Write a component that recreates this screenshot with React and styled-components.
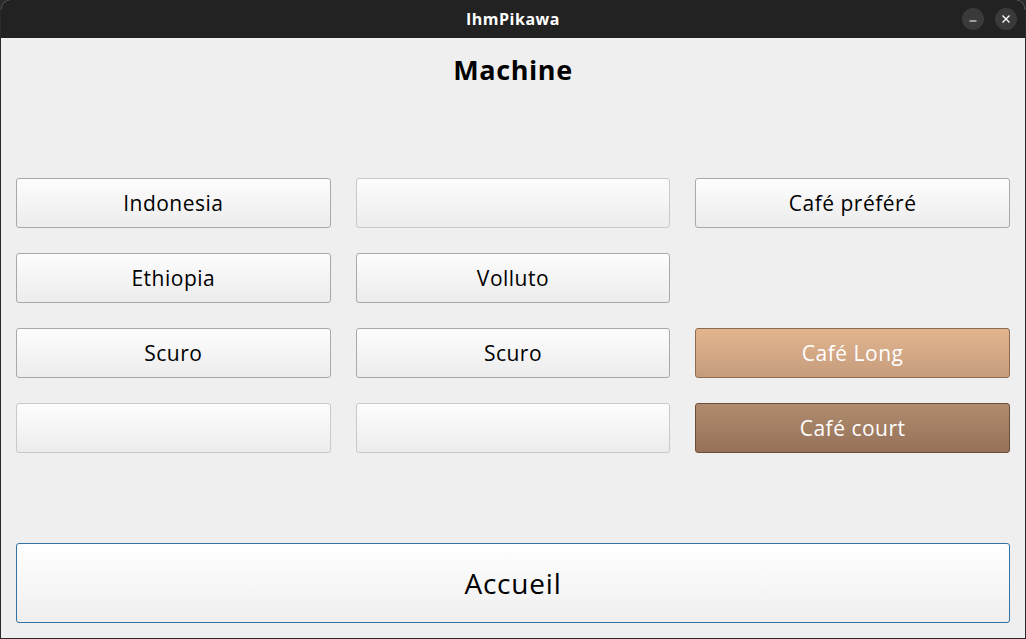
import styled, { createGlobalStyle } from 'styled-components';

const GlobalStyle = createGlobalStyle`
  html, body {
    margin: 0;
    padding: 0;
    background: #2b2b2b;
  }
  * {
    box-sizing: border-box;
  }
`;

const Window = styled.div`
  width: 1026px;
  height: 639px;
  display: flex;
  flex-direction: column;
  background: #efefef;
  border: 1px solid #2a2a2a;
  border-top: none;
  border-radius: 10px 10px 0 0;
  overflow: hidden;
  font-family: "Open Sans", "Noto Sans", sans-serif;
`;

const TitleBar = styled.div`
  height: 38px;
  flex-shrink: 0;
  background: #222222;
  display: flex;
  align-items: center;
  justify-content: center;
  position: relative;
  color: #ffffff;
  font-size: 16px;
  letter-spacing: 0.5px;
  font-weight: 700;
`;

const WindowControls = styled.div`
  position: absolute;
  right: 8px;
  top: 8px;
  display: flex;
  gap: 11px;
`;

const ControlButton = styled.div`
  width: 22px;
  height: 22px;
  border-radius: 50%;
  background: #3a3a3a;
  display: flex;
  align-items: center;
  justify-content: center;
`;

const Content = styled.div`
  flex: 1;
  display: flex;
  flex-direction: column;
  padding: 12px 15px 15px 15px;
`;

const Heading = styled.h1`
  margin: 0;
  height: 40px;
  line-height: 40px;
  text-align: center;
  font-size: 27px;
  letter-spacing: 0.6px;
  font-weight: 700;
  color: #000000;
`;

const Grid = styled.div`
  margin-top: 88px;
  display: grid;
  grid-template-columns: repeat(3, 1fr);
  grid-auto-rows: 50px;
  column-gap: 25px;
  row-gap: 25px;
`;

const tones = {
  normal: {
    bg: 'linear-gradient(#fdfdfd, #ececec)',
    border: '#a9a9a9',
    color: '#000000',
  },
  empty: {
    bg: 'linear-gradient(#fdfdfd, #ececec)',
    border: '#c9c9c9',
    color: '#000000',
  },
  long: {
    bg: 'linear-gradient(#e3b58f, #c59c7c)',
    border: '#8c6b51',
    color: '#ffffff',
  },
  court: {
    bg: 'linear-gradient(#b08b6f, #957258)',
    border: '#6a4e3a',
    color: '#ffffff',
  },
};

const Button = styled.div`
  display: flex;
  align-items: center;
  justify-content: center;
  border-radius: 3px;
  border: 1px solid ${p => tones[p.$tone].border};
  background: ${p => tones[p.$tone].bg};
  color: ${p => tones[p.$tone].color};
  font-size: 21px;
  letter-spacing: 0.5px;
`;

const Blank = styled.div``;

const Spacer = styled.div`
  flex: 1;
`;

const HomeButton = styled.div`
  height: 80px;
  display: flex;
  align-items: center;
  justify-content: center;
  border: 1px solid #2f73a8;
  border-radius: 3px;
  background: linear-gradient(#ffffff, #efefef);
  font-size: 28px;
  letter-spacing: 0.8px;
  color: #000000;
`;

const cells = [
  { label: 'Indonesia', tone: 'normal' },
  { label: '', tone: 'empty' },
  { label: 'Café préféré', tone: 'normal' },
  { label: 'Ethiopia', tone: 'normal' },
  { label: 'Volluto', tone: 'normal' },
  null,
  { label: 'Scuro', tone: 'normal' },
  { label: 'Scuro', tone: 'normal' },
  { label: 'Café Long', tone: 'long' },
  { label: '', tone: 'empty' },
  { label: '', tone: 'empty' },
  { label: 'Café court', tone: 'court' },
];

export default function App() {
  return (
    <>
      <GlobalStyle />
      <Window>
        <TitleBar>
          IhmPikawa
          <WindowControls>
            <ControlButton>
              <svg width="10" height="10" viewBox="0 0 10 10">
                <line x1="1.5" y1="7" x2="8.5" y2="7" stroke="#fff" strokeWidth="1.2" />
              </svg>
            </ControlButton>
            <ControlButton>
              <svg width="10" height="10" viewBox="0 0 10 10">
                <path d="M1.5 1.5 L8.5 8.5 M8.5 1.5 L1.5 8.5" stroke="#fff" strokeWidth="1.3" />
              </svg>
            </ControlButton>
          </WindowControls>
        </TitleBar>
        <Content>
          <Heading>Machine</Heading>
          <Grid>
            {cells.map((c, i) =>
              c ? (
                <Button key={i} $tone={c.tone}>{c.label}</Button>
              ) : (
                <Blank key={i} />
              )
            )}
          </Grid>
          <Spacer />
          <HomeButton>Accueil</HomeButton>
        </Content>
      </Window>
    </>
  );
}
